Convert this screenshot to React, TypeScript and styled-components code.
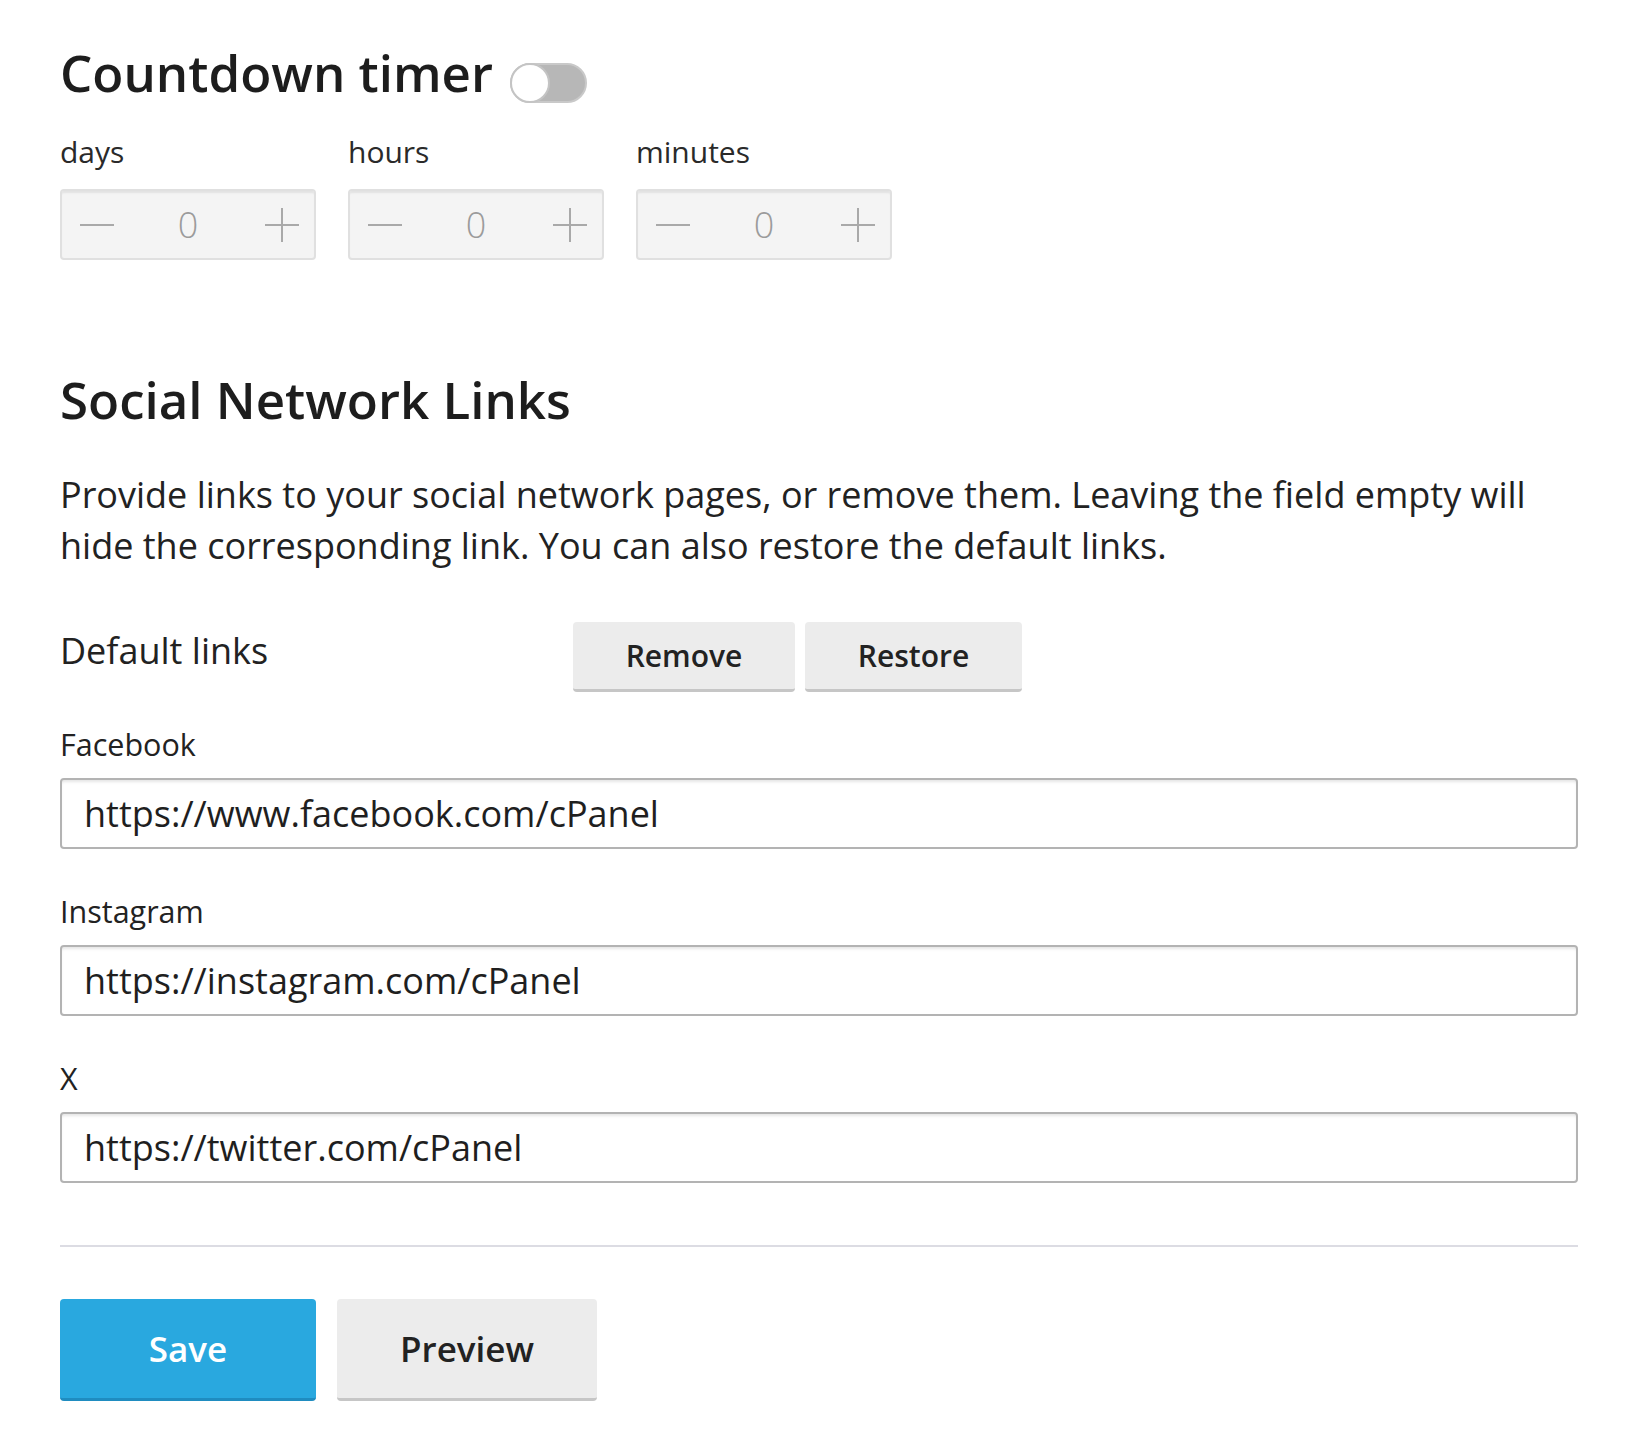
import React, { FC } from "react";
import styled, { createGlobalStyle } from "styled-components";

const GlobalStyle = createGlobalStyle`
  html, body {
    margin: 0;
    padding: 0;
    background: #ffffff;
  }
  body {
    font-family: "Open Sans", "Liberation Sans", sans-serif;
    color: #222222;
  }
  * {
    box-sizing: border-box;
  }
`;

const units = ["days", "hours", "minutes"];

const socialLinks = [
  { name: "Facebook", url: "https://www.facebook.com/cPanel" },
  { name: "Instagram", url: "https://instagram.com/cPanel" },
  { name: "X", url: "https://twitter.com/cPanel" },
];

const MinusIcon: FC = () => (
  <svg width="34" height="34" viewBox="0 0 34 34">
    <line x1="0" y1="17" x2="34" y2="17" stroke="#a9a9a9" strokeWidth="2" />
  </svg>
);

const PlusIcon: FC = () => (
  <svg width="34" height="34" viewBox="0 0 34 34">
    <line x1="0" y1="17" x2="34" y2="17" stroke="#a9a9a9" strokeWidth="2" />
    <line x1="17" y1="0" x2="17" y2="34" stroke="#a9a9a9" strokeWidth="2" />
  </svg>
);

const App: FC = () => {
  return (
    <Page>
      <GlobalStyle />
      <TitleRow>
        <Heading>Countdown timer</Heading>
        <Toggle role="switch" aria-checked="false">
          <Knob />
        </Toggle>
      </TitleRow>

      <Counters>
        {units.map((unit) => (
          <Counter key={unit}>
            <UnitLabel>{unit}</UnitLabel>
            <Stepper>
              <StepButton type="button" aria-label={`decrease ${unit}`}>
                <MinusIcon />
              </StepButton>
              <StepValue>0</StepValue>
              <StepButton type="button" aria-label={`increase ${unit}`}>
                <PlusIcon />
              </StepButton>
            </Stepper>
          </Counter>
        ))}
      </Counters>

      <SocialHeading>Social Network Links</SocialHeading>
      <Description>
        Provide links to your social network pages, or remove them. Leaving the
        field empty will hide the corresponding link. You can also restore the
        default links.
      </Description>

      <DefaultRow>
        <RowLabel>Default links</RowLabel>
        <ButtonGroup>
          <SmallButton type="button" $width={222}>
            Remove
          </SmallButton>
          <SmallButton type="button" $width={217}>
            Restore
          </SmallButton>
        </ButtonGroup>
      </DefaultRow>

      <Fields>
        {socialLinks.map((link) => (
          <Field key={link.name}>
            <FieldLabel>{link.name}</FieldLabel>
            <TextInput type="text" defaultValue={link.url} />
          </Field>
        ))}
      </Fields>

      <Divider />

      <Actions>
        <ActionButton type="button" $primary $width={256}>
          Save
        </ActionButton>
        <ActionButton type="button" $width={260}>
          Preview
        </ActionButton>
      </Actions>
    </Page>
  );
};

const Page = styled.main`
  width: 1518px;
  margin-left: 60px;
  padding: 42px 0 40px 0;
`;

const TitleRow = styled.div`
  display: flex;
  align-items: flex-start;
  gap: 17px;
`;

const Heading = styled.h1`
  margin: 0;
  font-size: 51px;
  line-height: 60px;
  font-weight: 600;
  color: #1d1d1d;
`;

const Toggle = styled.div`
  position: relative;
  width: 77px;
  height: 40px;
  margin-top: 21px;
  border-radius: 20px;
  background: #b7b7b7;
  border: 2px solid #c9c9c9;
`;

const Knob = styled.span`
  position: absolute;
  top: -2px;
  left: -2px;
  width: 40px;
  height: 40px;
  border-radius: 50%;
  background: #ffffff;
  border: 2px solid #c4c4c4;
`;

const Counters = styled.div`
  display: flex;
  gap: 32px;
  margin-top: 29px;
`;

const Counter = styled.div`
  display: flex;
  flex-direction: column;
  gap: 17px;
  width: 256px;
`;

const UnitLabel = styled.span`
  font-size: 30px;
  line-height: 40px;
  color: #2a2a2a;
`;

const Stepper = styled.div`
  display: grid;
  grid-template-columns: 70px 1fr 64px;
  align-items: center;
  height: 71px;
  background: #f4f4f4;
  border: 2px solid #e0e0e0;
  border-radius: 4px;
  box-shadow: inset 0 3px 2px -1px #e2e2e2;
`;

const StepButton = styled.button`
  display: flex;
  justify-content: center;
  align-items: center;
  height: 100%;
  padding: 0;
  border: none;
  background: transparent;
`;

const StepValue = styled.span`
  padding-right: 6px;
  text-align: center;
  font-size: 36px;
  font-weight: 300;
  color: #9b9b9b;
`;

const SocialHeading = styled(Heading)`
  margin-top: 109px;
`;

const Description = styled.p`
  margin: 40px 0 0 0;
  font-size: 36px;
  line-height: 51px;
  color: #222222;
`;

const DefaultRow = styled.div`
  display: flex;
  align-items: flex-start;
  margin-top: 51px;
`;

const RowLabel = styled.span`
  width: 513px;
  padding-top: 3px;
  font-size: 36px;
  line-height: 51px;
  color: #222222;
`;

const ButtonGroup = styled.div`
  display: flex;
  gap: 10px;
`;

const SmallButton = styled.button<{ $width: number }>`
  width: ${(p) => p.$width}px;
  height: 70px;
  padding: 0;
  border: none;
  border-bottom: 3px solid #c6c6c6;
  border-radius: 4px;
  background: #ececec;
  font-family: "Open Sans", "Liberation Sans", sans-serif;
  font-size: 30px;
  font-weight: 600;
  color: #222222;
`;

const Fields = styled.div`
  display: flex;
  flex-direction: column;
  gap: 42px;
  margin-top: 32px;
`;

const Field = styled.label`
  display: flex;
  flex-direction: column;
  gap: 14px;
`;

const FieldLabel = styled.span`
  font-size: 30.5px;
  line-height: 40px;
  color: #222222;
`;

const TextInput = styled.input`
  width: 100%;
  height: 71px;
  padding: 0 22px;
  border: 2px solid #b3b3b3;
  border-radius: 4px;
  box-shadow: inset 0 3px 3px -1px #e6e6e6;
  background: #ffffff;
  font-family: "Open Sans", "Liberation Sans", sans-serif;
  font-size: 36px;
  color: #1f1f1f;
  outline: none;
`;

const Divider = styled.hr`
  margin: 62px 0 0 0;
  border: none;
  height: 2px;
  background: #dcdce3;
`;

const Actions = styled.div`
  display: flex;
  gap: 21px;
  margin-top: 52px;
`;

const ActionButton = styled.button<{ $primary?: boolean; $width: number }>`
  width: ${(p) => p.$width}px;
  height: 102px;
  padding: 0;
  border: none;
  border-bottom: 3px solid ${(p) => (p.$primary ? "#1f8cc0" : "#c6c6c6")};
  border-radius: 4px;
  background: ${(p) => (p.$primary ? "#29a8df" : "#ececec")};
  font-family: "Open Sans", "Liberation Sans", sans-serif;
  font-size: 35px;
  font-weight: 600;
  color: ${(p) => (p.$primary ? "#ffffff" : "#222222")};
`;

export default App;
